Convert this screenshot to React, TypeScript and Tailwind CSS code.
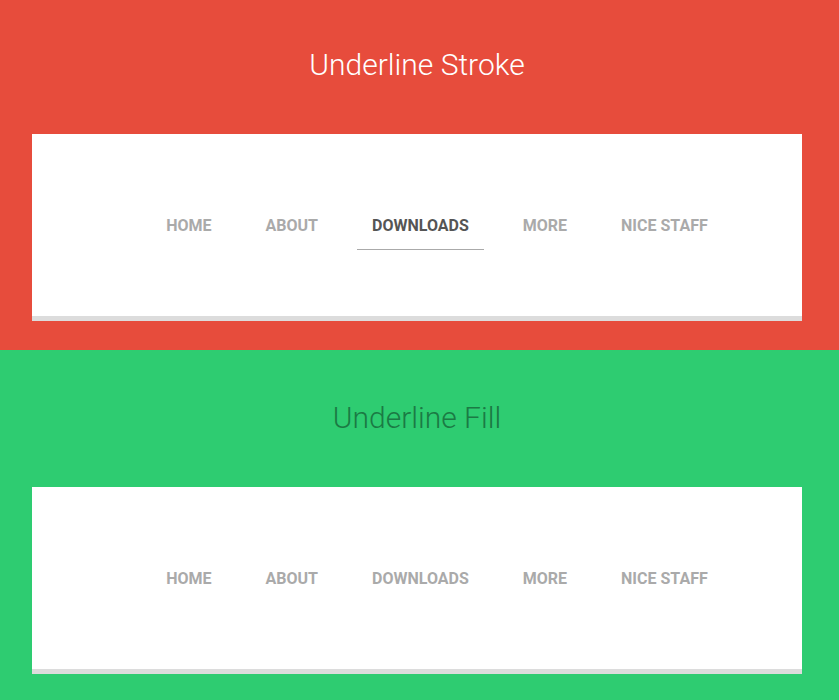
import React from 'react';

const links = ['Home', 'About', 'Downloads', 'More', 'Nice staff'];

function Nav({ active }: { active?: string }) {
  return (
    <div className="bg-white border-b-[5px] border-[#dcdcdc] pt-[67px] pb-[66px]">
      <ul className="flex justify-center gap-[24px] pl-[40px]">
        {links.map((l) => (
          <li key={l}>
            <a
              href="#"
              className={`block px-[15px] pt-[15px] pb-[13px] text-[16px] leading-[20px] font-bold uppercase border-b ${
                l === active ? 'text-[#555] border-[#aaa]' : 'text-[#aaa] border-transparent'
              }`}
            >
              {l}
            </a>
          </li>
        ))}
      </ul>
    </div>
  );
}

export default function App() {
  return (
    <div className="font-['Roboto',sans-serif]">
      {/* Underline Stroke */}
      <section className="bg-[#e74c3c] pl-[32px] pr-[37px] pt-[48px] pb-[29px]">
        <h1 className="text-center text-white text-[30px] leading-[34px] font-light mb-[52px]">Underline Stroke</h1>
        <Nav active="Downloads" />
      </section>

      {/* Underline Fill */}
      <section className="bg-[#2ecc71] pl-[32px] pr-[37px] pt-[51px] pb-[29px]">
        <h1 className="text-center text-[#1b7a44] text-[30px] leading-[34px] font-light mb-[52px]">Underline Fill</h1>
        <Nav />
      </section>
    </div>
  );
}
